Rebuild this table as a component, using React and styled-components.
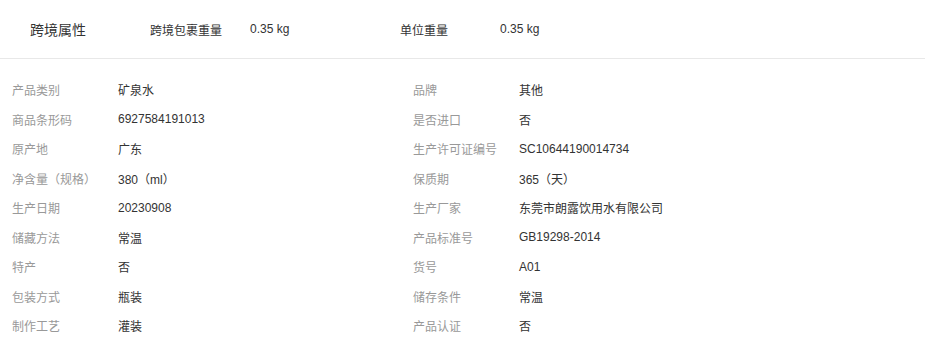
import React from "react";
import styled, { createGlobalStyle } from "styled-components";

const Global = createGlobalStyle`
  html, body { margin: 0; padding: 0; background: #fff; }
  body { font-family: "Liberation Sans", "Noto Sans CJK SC", sans-serif; }
`;

const Wrap = styled.div`
  width: 925px;
`;

const Header = styled.div`
  display: flex;
  align-items: center;
  height: 58px;
  padding-left: 30px;
  border-bottom: 1px solid #e8e8e8;
  color: #333;
`;

const Title = styled.div`
  width: 120px;
  font-size: 14px;
`;

const HeadLabel = styled.div`
  width: 100px;
  font-size: 12px;
`;

const HeadValue = styled.div`
  width: ${(p) => p.$w}px;
  font-size: 12px;
`;

const Grid = styled.div`
  display: grid;
  grid-template-columns: 401px 1fr;
  padding: 16px 0 0 12px;
`;

const Item = styled.div`
  display: flex;
  align-items: center;
  height: 29.5px;
  font-size: 12px;
`;

const Label = styled.div`
  width: 106px;
  color: #999;
`;

const Value = styled.div`
  color: #333;
`;

const rows = [
  ["产品类别", "矿泉水", "品牌", "其他"],
  ["商品条形码", "6927584191013", "是否进口", "否"],
  ["原产地", "广东", "生产许可证编号", "SC10644190014734"],
  ["净含量（规格）", "380（ml）", "保质期", "365（天）"],
  ["生产日期", "20230908", "生产厂家", "东莞市朗露饮用水有限公司"],
  ["储藏方法", "常温", "产品标准号", "GB19298-2014"],
  ["特产", "否", "货号", "A01"],
  ["包装方式", "瓶装", "储存条件", "常温"],
  ["制作工艺", "灌装", "产品认证", "否"],
];

export default function App() {
  return (
    <Wrap>
      <Global />
      <Header>
        <Title>跨境属性</Title>
        <HeadLabel>跨境包裹重量</HeadLabel>
        <HeadValue $w={150}>0.35 kg</HeadValue>
        <HeadLabel>单位重量</HeadLabel>
        <HeadValue $w={100}>0.35 kg</HeadValue>
      </Header>
      <Grid>
        {rows.map((r, i) => (
          <React.Fragment key={i}>
            <Item>
              <Label>{r[0]}</Label>
              <Value>{r[1]}</Value>
            </Item>
            <Item>
              <Label>{r[2]}</Label>
              <Value>{r[3]}</Value>
            </Item>
          </React.Fragment>
        ))}
      </Grid>
    </Wrap>
  );
}
